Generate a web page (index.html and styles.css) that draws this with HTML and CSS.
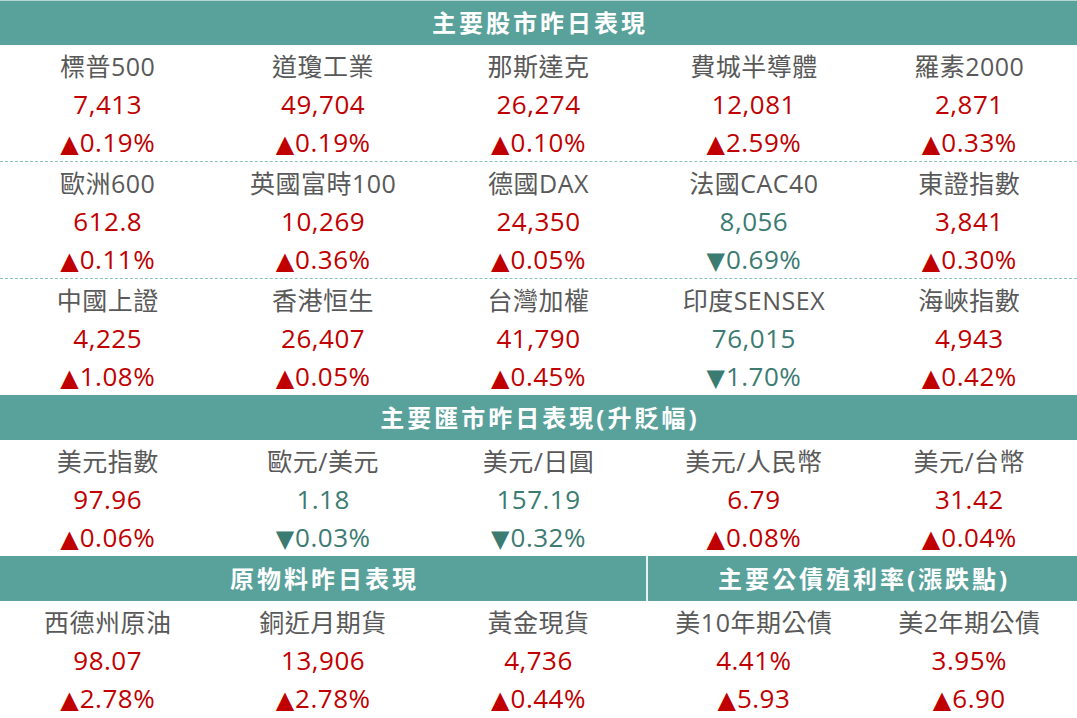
FILE: index.html
```html
<!DOCTYPE html>
<html lang="zh-Hant">
<head>
<meta charset="utf-8">
<link rel="stylesheet" href="styles.css">
</head>
<body>
<div class="board">
  <div class="head full first">主要股市昨日表現</div>

  <div class="cell"><div class="name">標普500</div><div class="val up">7,413</div><div class="chg up"><span class="tri">▲</span>0.19%</div></div>
  <div class="cell"><div class="name">道瓊工業</div><div class="val up">49,704</div><div class="chg up"><span class="tri">▲</span>0.19%</div></div>
  <div class="cell"><div class="name">那斯達克</div><div class="val up">26,274</div><div class="chg up"><span class="tri">▲</span>0.10%</div></div>
  <div class="cell"><div class="name">費城半導體</div><div class="val up">12,081</div><div class="chg up"><span class="tri">▲</span>2.59%</div></div>
  <div class="cell"><div class="name">羅素2000</div><div class="val up">2,871</div><div class="chg up"><span class="tri">▲</span>0.33%</div></div>

  <div class="sep full"></div>

  <div class="cell"><div class="name">歐洲600</div><div class="val up">612.8</div><div class="chg up"><span class="tri">▲</span>0.11%</div></div>
  <div class="cell"><div class="name">英國富時100</div><div class="val up">10,269</div><div class="chg up"><span class="tri">▲</span>0.36%</div></div>
  <div class="cell"><div class="name">德國DAX</div><div class="val up">24,350</div><div class="chg up"><span class="tri">▲</span>0.05%</div></div>
  <div class="cell"><div class="name">法國CAC40</div><div class="val down">8,056</div><div class="chg down"><span class="tri">▼</span>0.69%</div></div>
  <div class="cell"><div class="name">東證指數</div><div class="val up">3,841</div><div class="chg up"><span class="tri">▲</span>0.30%</div></div>

  <div class="sep full"></div>

  <div class="cell"><div class="name">中國上證</div><div class="val up">4,225</div><div class="chg up"><span class="tri">▲</span>1.08%</div></div>
  <div class="cell"><div class="name">香港恒生</div><div class="val up">26,407</div><div class="chg up"><span class="tri">▲</span>0.05%</div></div>
  <div class="cell"><div class="name">台灣加權</div><div class="val up">41,790</div><div class="chg up"><span class="tri">▲</span>0.45%</div></div>
  <div class="cell"><div class="name">印度SENSEX</div><div class="val down">76,015</div><div class="chg down"><span class="tri">▼</span>1.70%</div></div>
  <div class="cell"><div class="name">海峽指數</div><div class="val up">4,943</div><div class="chg up"><span class="tri">▲</span>0.42%</div></div>

  <div class="head full">主要匯市昨日表現(升貶幅)</div>

  <div class="cell"><div class="name">美元指數</div><div class="val up">97.96</div><div class="chg up"><span class="tri">▲</span>0.06%</div></div>
  <div class="cell"><div class="name">歐元/美元</div><div class="val down">1.18</div><div class="chg down"><span class="tri">▼</span>0.03%</div></div>
  <div class="cell"><div class="name">美元/日圓</div><div class="val down">157.19</div><div class="chg down"><span class="tri">▼</span>0.32%</div></div>
  <div class="cell"><div class="name">美元/人民幣</div><div class="val up">6.79</div><div class="chg up"><span class="tri">▲</span>0.08%</div></div>
  <div class="cell"><div class="name">美元/台幣</div><div class="val up">31.42</div><div class="chg up"><span class="tri">▲</span>0.04%</div></div>

  <div class="head span3">原物料昨日表現</div>
  <div class="head span2 divided">主要公債殖利率(漲跌點)</div>

  <div class="cell"><div class="name">西德州原油</div><div class="val up">98.07</div><div class="chg up"><span class="tri">▲</span>2.78%</div></div>
  <div class="cell"><div class="name">銅近月期貨</div><div class="val up">13,906</div><div class="chg up"><span class="tri">▲</span>2.78%</div></div>
  <div class="cell"><div class="name">黃金現貨</div><div class="val up">4,736</div><div class="chg up"><span class="tri">▲</span>0.44%</div></div>
  <div class="cell"><div class="name">美10年期公債</div><div class="val up">4.41%</div><div class="chg up"><span class="tri">▲</span>5.93</div></div>
  <div class="cell"><div class="name">美2年期公債</div><div class="val up">3.95%</div><div class="chg up"><span class="tri">▲</span>6.90</div></div>
</div>
</body>
</html>
```

FILE: styles.css
```css
* { box-sizing: border-box; }
html, body { margin: 0; padding: 0; background: #ffffff; }
body {
  font-family: "Open Sans", "Noto Sans CJK TC", sans-serif;
  width: 1077px;
  height: 718px;
  overflow: hidden;
}
.board {
  display: grid;
  grid-template-columns: repeat(5, 1fr);
}
.full { grid-column: 1 / -1; }
.span3 { grid-column: span 3; }
.span2 { grid-column: span 2; }
.head {
  background: #59a19b;
  color: #ffffff;
  font-family: "Open Sans", "Noto Sans CJK TC", sans-serif;
  font-weight: bold;
  font-size: 24px;
  height: 45px;
  line-height: 45px;
  text-align: center;
  letter-spacing: 3px;
  padding-left: 3px;
}
.head.first {
  border-top: 1px solid #b5d6d2;
  line-height: 43px;
}
.divided { border-left: 2px solid #e6f1f0; }
.cell {
  text-align: center;
  height: 116px;
  padding-top: 2px;
  display: flex;
  flex-direction: column;
}
.cell > div {
  flex-shrink: 0;
  height: 38.2px;
  line-height: 38.2px;
  white-space: nowrap;
}
.name {
  color: #595959;
  font-size: 25px;
  letter-spacing: 0.5px;
}
.val, .chg {
  font-size: 26px;
  letter-spacing: 0.5px;
}
.up { color: #c00000; }
.down { color: #3b7b72; }
.tri {
  font-family: "DejaVu Sans", sans-serif;
  font-size: 24px;
  letter-spacing: 1px;
}
.sep {
  height: 1px;
  border-top: 1px dashed #8fbfba;
}
```
